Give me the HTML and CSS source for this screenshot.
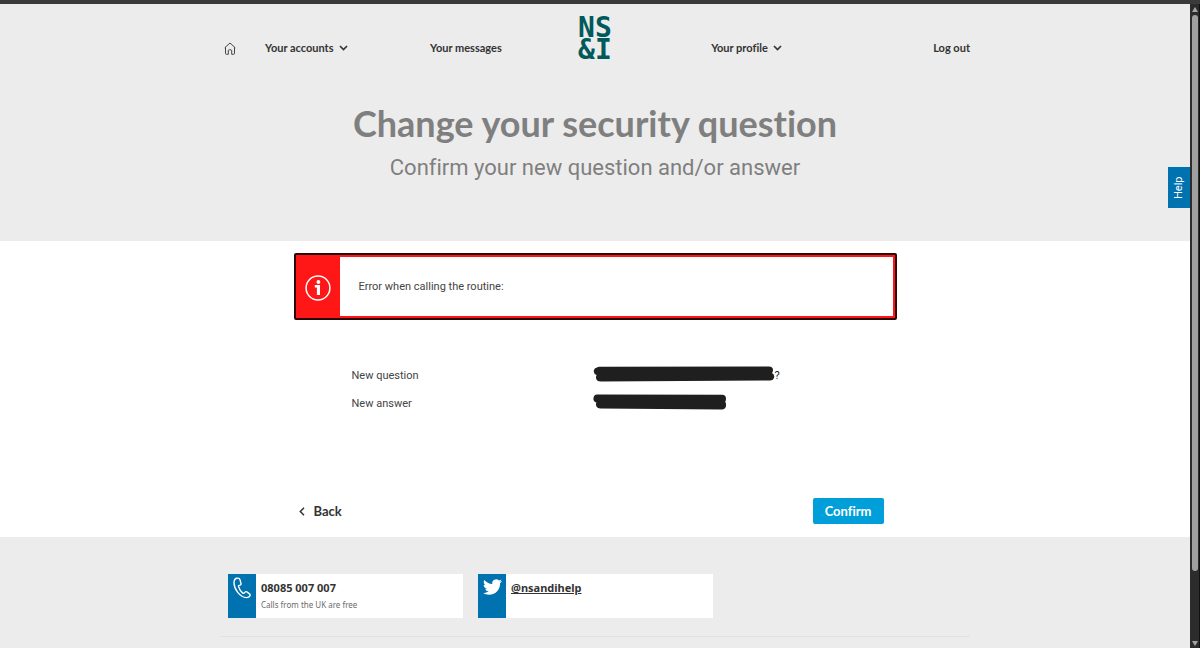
FILE: index.html
```html
<!DOCTYPE html>
<html lang="en">
<head>
<meta charset="utf-8">
<title>Change your security question</title>
<meta name="viewport" content="width=device-width, initial-scale=1">
<link rel="stylesheet" href="styles.css">
</head>
<body>
<div class="window">
  <div class="page">
    <header class="header">
      <nav class="nav container" aria-label="Main">
        <a class="nav-link" href="#" aria-label="Home">
          <svg class="home-icon" viewBox="0 0 12 13" aria-hidden="true"><path d="M.7 5.8 6 1l5.3 4.8M1.5 5.2v6.2q0 .9.9.9h1.9V8.7q0-.9.9-.9h1.6q.9 0 .9.9v3.6h1.9q.9 0 .9-.9V5.2"/></svg>
        </a>
        <button class="nav-link" type="button">Your accounts
          <svg class="chevron" viewBox="0 0 9 6" aria-hidden="true"><path d="m1 1 3.5 3.6L8 1"/></svg>
        </button>
        <a class="nav-link" href="#">Your messages</a>
        <a class="logo" href="#">NS<br>&amp;I</a>
        <button class="nav-link" type="button">Your profile
          <svg class="chevron" viewBox="0 0 9 6" aria-hidden="true"><path d="m1 1 3.5 3.6L8 1"/></svg>
        </button>
        <a class="nav-link" href="#">Log out</a>
      </nav>
      <h1 class="title">Change your security question</h1>
      <p class="subtitle">Confirm your new question and/or answer</p>
    </header>

    <main class="main">
      <div class="alert" role="alert">
        <div class="alert-mark">
          <svg class="info-icon" viewBox="0 0 26 26" aria-hidden="true"><circle class="ring" cx="13" cy="13" r="11.9"/><circle cx="13.4" cy="7" r="1.9"/><path d="M9.800 10h5.200v10h-3.100v-7.600H9.800z"/></svg>
        </div>
        <p class="alert-text">Error when calling the routine:</p>
      </div>
      <dl class="details">
        <dt>New question</dt>
        <dd>
          <svg class="mask mask-question" viewBox="0 0 182 16" aria-hidden="true"><path d="M4 1.5Q5 .6 7 .8L176 .4q4 0 4 3.6 0 2-1 3 3 1.500 2 5-1 2.500-4 2.500L8 15.400q-5 0-5-4 0-1.400.6-2.400Q.4 7.800.8 4.600 1.200 1.800 4 1.500z"/></svg><span>?</span>
        </dd>
        <dt>New answer</dt>
        <dd>
          <svg class="mask mask-answer" viewBox="0 0 134 16" aria-hidden="true"><path d="M4 .6 129 .8q4 .2 4 4 0 2-.8 3 1.200 1.200.8 4.200-.6 3.400-4 3.400L7 14.600q-4-.4-4-4 0-1.400.4-2.200Q.2 7.600.4 4.400.8.8 4 .6z"/></svg>
        </dd>
      </dl>
      <div class="actions">
        <button class="back" type="button">
          <svg class="back-icon" viewBox="0 0 6 9" aria-hidden="true"><path d="M5 .8 1.300 4.500 5 8.200"/></svg>
          Back
        </button>
        <button class="confirm" type="submit">Confirm</button>
      </div>
    </main>

    <footer class="footer">
      <div class="footer-inner container">
        <section class="contact">
          <div class="contact-mark">
            <svg class="phone-icon" viewBox="0 0 18 22" aria-hidden="true"><path d="M3.700 1.300C2 1.700 1 3.600 1 5.800c0 3 1.300 6.600 3.700 9.600 2.500 3.100 5.800 5.200 8.700 5.200 1.800 0 3.300-.9 3.700-2.200.2-.7 0-1.200-.6-1.600l-2.700-1.900c-.7-.4-1.300-.4-1.800.2l-.9 1c-.4.4-.8.4-1.300 0C7.700 14.500 6.200 12 5.500 9.400c-.1-.5.1-.8.6-1l1.100-.3c.7-.3 1-.8.8-1.500l-1-3.900c-.4-1.300-1.700-1.800-3.300-1.400z"/></svg>
          </div>
          <div class="contact-body">
            <strong class="contact-title">08085 007 007</strong>
            <span class="contact-note">Calls from the UK are free</span>
          </div>
        </section>
        <section class="contact">
          <div class="contact-mark">
            <svg class="twitter-icon" viewBox="0 0 24 20" aria-hidden="true"><path d="M23.950 2.570a10 10 0 0 1-2.820.780 4.960 4.960 0 0 0 2.160-2.730c-.950.560-2 .960-3.130 1.190a4.920 4.920 0 0 0-8.380 4.480C7.690 6.100 4.070 4.130 1.640 1.160A4.820 4.820 0 0 0 .970 3.640c0 1.710.870 3.210 2.190 4.100a4.900 4.900 0 0 1-2.230-.620v.060a4.920 4.920 0 0 0 3.950 4.830 5 5 0 0 1-2.210.080 4.940 4.940 0 0 0 4.600 3.420A9.870 9.870 0 0 1 0 17.540a14 14 0 0 0 7.550 2.210c9.050 0 14-7.500 14-13.990 0-.210 0-.420-.020-.630a9.940 9.940 0 0 0 2.460-2.550z"/></svg>
          </div>
          <div class="contact-body">
            <a class="contact-title" href="#">@nsandihelp</a>
          </div>
        </section>
      </div>
    </footer>
    <button class="help" type="button">Help</button>
  </div>
  <div class="scrollbar" aria-hidden="true">
    <svg class="arrow" viewBox="0 0 6 5"><path d="M3 0 6 5H0z"/></svg>
    <div class="thumb"></div>
    <svg class="arrow" viewBox="0 0 6 5"><path d="M0 0h6L3 5z"/></svg>
  </div>
</div>
</body>
</html>
```
FILE: styles.css
```css
* { box-sizing: border-box; }
body {
  margin: 0;
  background: #fff;
  color: #333;
  font-family: Roboto, "Noto Sans", sans-serif;
  font-size: 11px;
  font-variant-ligatures: none;
}
h1, p, dl, dd { margin: 0; }
a { color: inherit; text-decoration: none; }
button { border: 0; padding: 0; background: none; color: inherit; font: inherit; font-variant-ligatures: none; cursor: pointer; }
svg { display: block; flex: none; }

.window {
  display: flex;
  min-height: 100vh;
  border-top: 4px solid #3b3a3a;
}
.page {
  position: relative;
  flex: 1;
  display: flex;
  flex-direction: column;
}
.container { width: 100%; max-width: 750px; margin: 0 auto; }

.header {
  padding: 13px 0 57px;
  background: #ececec;
  color: #7f7f7f;
  text-align: center;
}
.nav {
  display: grid;
  grid-template-columns: 45fr 165fr 148fr 133fr 222fr auto;
  align-items: center;
  color: #333;
}
.nav-link {
  display: flex;
  align-items: center;
  gap: 5px;
  padding-top: 18px;
  font-family: Lato, sans-serif;
  font-size: 11px;
  line-height: 16px;
  font-weight: 700;
}
.home-icon { width: 12px; height: 13px; margin-left: 4px; fill: none; stroke: #444; }
.chevron { width: 9px; height: 6px; fill: none; stroke: #333; stroke-width: 1.600; }
.logo {
  color: #005a5b;
  font-family: "DejaVu Sans Mono", monospace;
  font-size: 28px;
  line-height: 22px;
  font-weight: 700;
  text-align: left;
}
.title {
  margin-top: 38px;
  font-family: Lato, sans-serif;
  font-size: 36px;
  line-height: 48px;
  font-weight: 700;
}
.subtitle {
  margin-top: 5px;
  font-size: 22px;
  line-height: 32px;
}

.main { width: 100%; max-width: 603px; margin: 0 auto; padding: 12px 0 13px; }
.alert {
  display: flex;
  min-height: 67px;
  border: 2px solid #2b0606;
  border-radius: 2px;
  background: #ff1616;
}
.alert-mark { display: flex; flex: none; width: 44px; align-items: center; justify-content: center; padding-top: 2px; }
.info-icon { width: 26px; height: 26px; fill: #fff; }
.ring { fill: none; stroke: #fff; stroke-width: 1.500; }
.alert-text {
  flex: 1;
  margin: 2px 2px 2px 0;
  padding: 20px 19px 19px;
  background: #fff;
  color: #444;
  line-height: 20px;
}
.details {
  display: grid;
  grid-template-columns: 241px 1fr;
  row-gap: 8px;
  padding: 46px 0 0 58px;
  color: #444;
  line-height: 20px;
}
.details dd { display: flex; align-items: flex-start; color: #222; }
.mask { fill: #1f1f1f; height: 16px; }
.mask-question { width: 182px; }
.mask-answer { width: 134px; }
.actions {
  display: flex;
  align-items: center;
  justify-content: space-between;
  margin-top: 84px;
  padding: 0 13px 0 5px;
  font-family: Lato, sans-serif;
  font-size: 13px;
  line-height: 18px;
}
.back { display: flex; align-items: center; gap: 9px; font-weight: 700; }
.back-icon { width: 6px; height: 9px; fill: none; stroke: #333; stroke-width: 1.500; }
.confirm { padding: 4px 12px; border-radius: 2px; background: #009fda; color: #fff; font-weight: 700; }

.footer { flex: 1; padding-top: 37px; background: #ececec; }
.footer-inner {
  display: flex;
  gap: 15px;
  padding: 0 8px 18px;
  border-bottom: 1px solid #e2e2e2;
}
.contact { display: flex; flex: 0 1 235px; min-height: 44px; background: #fff; }
.contact-mark { display: flex; flex: none; width: 28px; justify-content: center; padding-top: 3px; background: #0072b0; }
.phone-icon { width: 18px; height: 22px; fill: none; stroke: #fff; stroke-width: 1.400; }
.twitter-icon { width: 19px; height: 20px; fill: #fff; }
.contact-body { display: flex; flex-direction: column; align-items: flex-start; padding: 5px; font-family: "Noto Sans", sans-serif; }
.contact-title { color: #333; line-height: 18px; font-weight: 700; }
a.contact-title { text-decoration: underline; }
.contact-note { color: #6b6b6b; font-size: 8px; line-height: 16px; }

.help {
  position: absolute;
  top: 163px;
  right: 0;
  width: 22px;
  height: 41px;
  background: #0072b0;
  color: #fff;
  line-height: 22px;
  writing-mode: vertical-rl;
  transform: rotate(180deg);
}
.scrollbar {
  display: flex;
  flex: none;
  flex-direction: column;
  align-items: center;
  width: 10px;
  padding: 3px 0 2px;
  border-right: 1px solid #111;
  background: #2c2c2c;
}
.arrow { width: 6px; height: 5px; fill: #a3a3a3; }
.thumb { width: 6px; height: 87%; margin: 3px 0 auto; border-radius: 3px; background: #a0a0a0; }
```
